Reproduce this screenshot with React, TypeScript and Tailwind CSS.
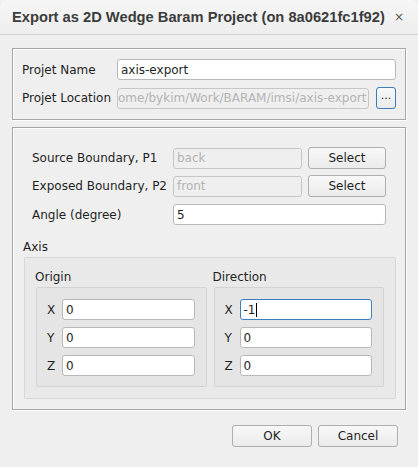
import type { ReactNode } from 'react';

const FONT = "font-['DejaVu_Sans','Noto_Sans',sans-serif]";

function Field({ value, disabled, focused, tight, className = '' }: { value: string; disabled?: boolean; focused?: boolean; tight?: boolean; className?: string }) {
  return (
    <div
      className={`h-[21px] flex items-center rounded-[3px] border overflow-hidden whitespace-nowrap ${
        tight ? 'px-0' : 'px-[3px]'
      } ${
        focused
          ? 'border-[#3b7fbf] bg-white'
          : disabled
          ? 'border-[#c6c6c6] bg-[#efefef] text-[#b3b3b3]'
          : 'border-[#b8b8b8] bg-white text-[#1f1f1f]'
      } ${className}`}
    >
      <span className="shrink-0">{value}</span>
      {focused && <span className="w-px h-[14px] bg-black ml-px" />}
    </div>
  );
}

function Btn({ children, className = '', blue }: { children: ReactNode; className?: string; blue?: boolean }) {
  return (
    <div
      className={`h-[22px] flex items-center justify-center rounded-[3px] border bg-gradient-to-b from-[#f8f8f8] to-[#ebebeb] text-[#1f1f1f] ${
        blue ? 'border-[#3d7dbb]' : 'border-[#aeaeae]'
      } ${className}`}
    >
      {children}
    </div>
  );
}

function XYZ({ title, values, focusFirst }: { title: string; values: string[]; focusFirst?: boolean }) {
  return (
    <div className="flex-1 flex flex-col">
      <div className="h-[29px] flex items-center pt-[8px]">{title}</div>
      <div className="ml-px border border-[#d3d3d3] bg-[#e5e5e5] rounded-[2px] pl-[10px] pr-[11px] pt-[11px] pb-[10px] flex flex-col gap-[7px]">
        {['X', 'Y', 'Z'].map((k, i) => (
          <div key={k} className="flex items-center">
            <span className="w-[15px]">{k}</span>
            <Field value={values[i]} focused={focusFirst && i === 0} className="flex-1" />
          </div>
        ))}
      </div>
    </div>
  );
}

export default function App() {
  return (
    <div className={`w-[418px] h-[467px] bg-[#efefef] text-[12px] text-[#1f1f1f] flex flex-col ${FONT}`}>
      {/* title bar */}
      <div className="h-[35px] shrink-0 flex items-center justify-between pl-[12px] pr-[14px] bg-gradient-to-b from-[#f6f6f6] to-[#eeeeee] border-b border-[#d2d2d2] rounded-t-[7px]">
        <span className="font-['Liberation_Sans',sans-serif] font-bold text-[14.7px] text-[#3c3c3c] pt-[1px]">
          Export as 2D Wedge Baram Project (on 8a0621fc1f92)
        </span>
        <span className="text-[12px] text-[#555] leading-none">×</span>
      </div>

      {/* body */}
      <div className="flex-1 flex flex-col px-[12px] pt-[13px]">
        {/* project group */}
        <div className="border border-[#a6a6a6] shadow-[inset_1px_1px_0_#fff,1px_1px_0_#fff] pl-[9px] pr-[9px] py-[10px] flex flex-col gap-[7px]">
          <div className="flex items-center">
            <span className="w-[95px]">Projet Name</span>
            <Field value="axis-export" className="flex-1" />
          </div>
          <div className="flex items-center">
            <span className="w-[95px]">Projet Location</span>
            <Field value="ome/bykim/Work/BARAM/imsi/axis-export" disabled tight className="flex-1" />
            <Btn blue className="ml-[7px] w-[20px] h-[21px] text-[11px] pb-[3px]">...</Btn>
          </div>
        </div>

        {/* wedge group */}
        <div className="mt-[7px] border border-[#a6a6a6] shadow-[inset_1px_1px_0_#fff,1px_1px_0_#fff] pl-[10px] pr-[9px] pt-[19px] pb-[10px] flex flex-col">
          <div className="pl-[9px] pr-[10px] flex flex-col gap-[6px]">
            <div className="flex items-center">
              <span className="w-[141px]">Source Boundary, P1</span>
              <Field value="back" disabled className="w-[129px]" />
              <Btn className="ml-[6px] flex-1">Select</Btn>
            </div>
            <div className="flex items-center">
              <span className="w-[141px]">Exposed Boundary, P2</span>
              <Field value="front" disabled className="w-[129px]" />
              <Btn className="ml-[6px] flex-1">Select</Btn>
            </div>
            <div className="flex items-center mt-[1px]">
              <span className="w-[141px]">Angle (degree)</span>
              <Field value="5" className="flex-1" />
            </div>
          </div>

          <div className="mt-[15px] h-[14px] flex items-center">Axis</div>

          <div className="mt-[3px] ml-px border border-[#d6d6d6] bg-[#e9e9e9] rounded-[2px] pl-[10px] pr-[11px] pb-[11px] flex gap-[6px]">
            <XYZ title="Origin" values={['0', '0', '0']} />
            <XYZ title="Direction" values={['-1', '0', '0']} focusFirst />
          </div>
        </div>

        {/* buttons */}
        <div className="flex justify-end gap-[6px] mt-[15px] pr-[8px]">
          <Btn className="w-[80px]">OK</Btn>
          <Btn className="w-[80px]">Cancel</Btn>
        </div>
      </div>
    </div>
  );
}
